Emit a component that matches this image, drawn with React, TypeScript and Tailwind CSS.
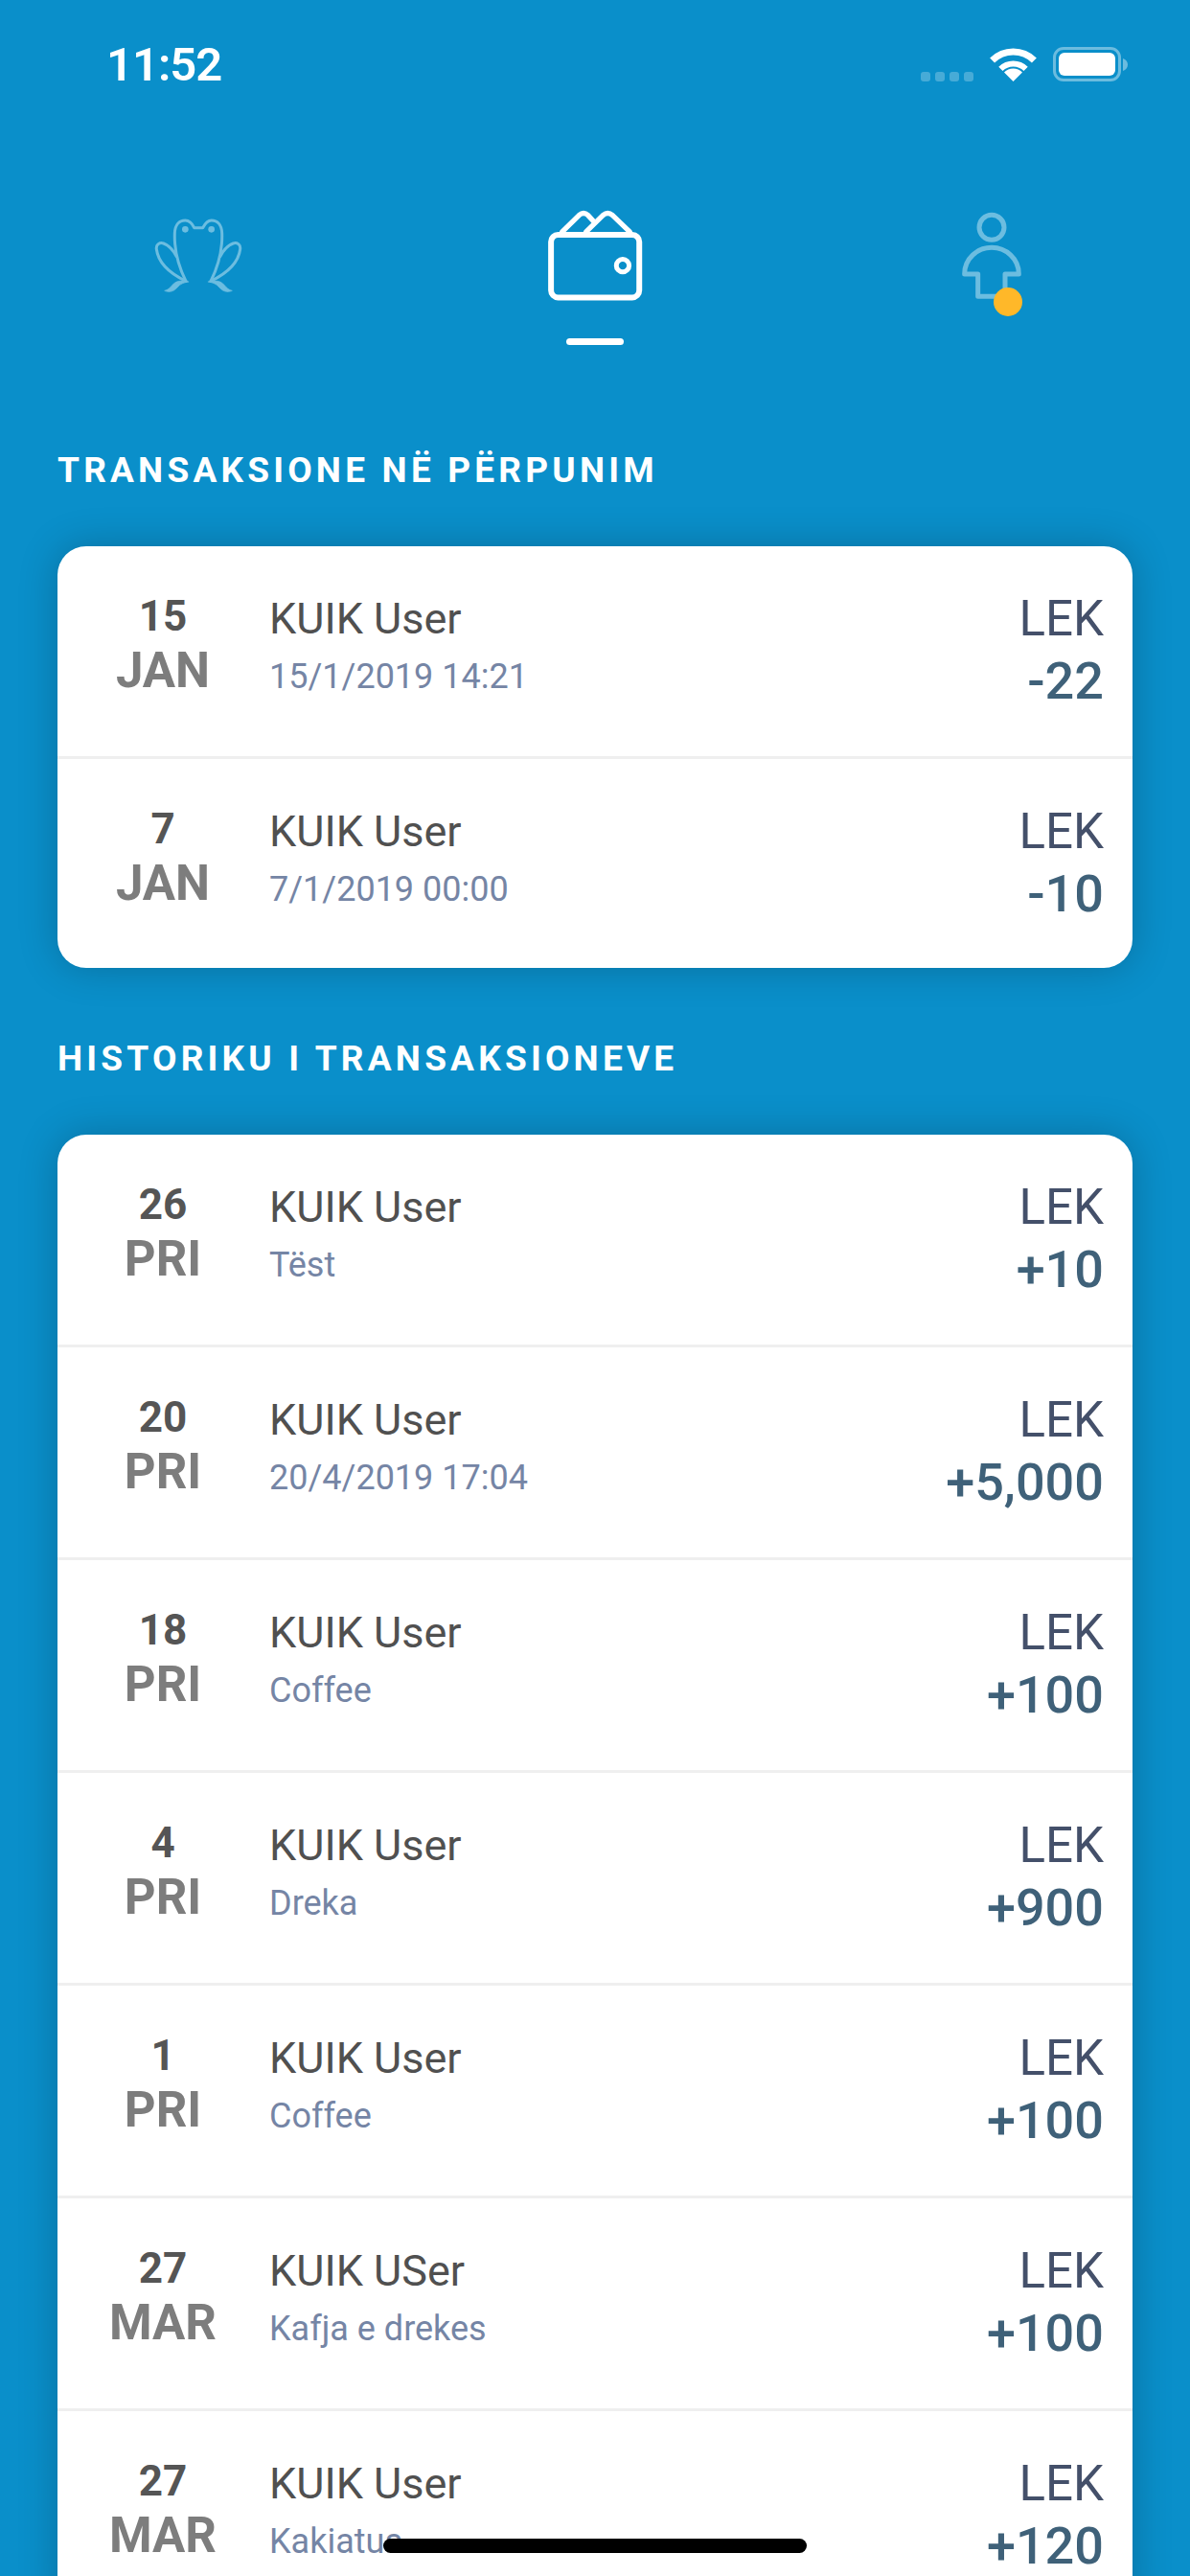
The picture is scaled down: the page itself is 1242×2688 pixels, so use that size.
const pending = [
  { day: "15", month: "JAN", name: "KUIK User", note: "15/1/2019 14:21", amount: "-22" },
  { day: "7", month: "JAN", name: "KUIK User", note: "7/1/2019 00:00", amount: "-10" },
];

const history = [
  { day: "26", month: "PRI", name: "KUIK User", note: "Tëst", amount: "+10" },
  { day: "20", month: "PRI", name: "KUIK User", note: "20/4/2019 17:04", amount: "+5,000" },
  { day: "18", month: "PRI", name: "KUIK User", note: "Coffee", amount: "+100" },
  { day: "4", month: "PRI", name: "KUIK User", note: "Dreka", amount: "+900" },
  { day: "1", month: "PRI", name: "KUIK User", note: "Coffee", amount: "+100" },
  { day: "27", month: "MAR", name: "KUIK USer", note: "Kafja e drekes", amount: "+100" },
  { day: "27", month: "MAR", name: "KUIK User", note: "Kakiatus", amount: "+120" },
];

type Tx = (typeof pending)[number];

function StatusBar() {
  return (
    <div className="flex h-[190px] items-start justify-between pl-[111px] pr-[65px] pt-[45px]">
      <span className="text-[49px] font-semibold leading-[46px] tracking-[-1px] text-white">11:52</span>
      <div className="flex items-start pt-[4px]">
        <div className="mt-[26px] flex gap-[5px]">
          <span className="h-[10px] w-[10px] rounded-[3px] bg-white/25" />
          <span className="h-[10px] w-[10px] rounded-[3px] bg-white/25" />
          <span className="h-[10px] w-[10px] rounded-[3px] bg-white/25" />
          <span className="h-[10px] w-[10px] rounded-[3px] bg-white/25" />
        </div>
        <svg className="ml-[17px]" width="49" height="36" viewBox="0 0 49 36" fill="none">
          <path d="M2.6 14.1A31 31 0 0 1 46.4 14.1" stroke="white" strokeWidth="7" />
          <path d="M11.4 22.9A18.5 18.5 0 0 1 37.6 22.9" stroke="white" strokeWidth="6" />
          <path d="M24.5 36L15 26.5A13.4 13.4 0 0 1 34 26.5Z" fill="white" />
        </svg>
        <div className="ml-[17px] h-[36px] w-[71px] rounded-[11px] border-[3px] border-white/40 p-[3px]">
          <div className="h-full w-full rounded-[6px] bg-white" />
        </div>
        <svg className="ml-[2px] mt-[12px]" width="5" height="13" viewBox="0 0 5 13">
          <path d="M0 0C3 1 5 3.5 5 6.5C5 9.5 3 12 0 13Z" fill="white" fillOpacity="0.4" />
        </svg>
      </div>
    </div>
  );
}

function FrogIcon() {
  return (
    <svg width="154" height="150" viewBox="0 0 462 450" fill="none" stroke="#6cbde0" strokeWidth="9" strokeLinecap="round" strokeLinejoin="round">
      <path d="M192 310C168 262 155 215 157 160C158 132 172 120 190 120C205 120 212 130 218 143H245C252 130 260 120 272 120C290 120 304 132 305 160C307 215 294 262 270 310" />
      <path d="M192 310C140 285 105 250 100 210C98 195 110 188 122 192C138 198 152 212 162 232" />
      <path d="M270 310C322 285 357 250 362 210C364 195 352 188 340 192C324 198 310 212 300 232" />
      <path d="M200 312C175 306 160 310 150 322C142 332 135 338 125 340C140 347 155 342 165 330C175 318 185 315 200 312Z" fill="#6cbde0" strokeWidth="2" />
      <path d="M262 312C287 306 302 310 312 322C320 332 327 338 337 340C322 347 307 342 297 330C287 318 277 315 262 312Z" fill="#6cbde0" strokeWidth="2" />
      <circle cx="190" cy="148" r="10" fill="#6cbde0" stroke="none" />
      <circle cx="272" cy="148" r="10" fill="#6cbde0" stroke="none" />
    </svg>
  );
}

function WalletIcon() {
  return (
    <svg width="160" height="133" viewBox="3 0 480 400" fill="none" stroke="white" strokeLinecap="round" strokeLinejoin="round">
      <rect x="105" y="135" width="277" height="197" rx="22" strokeWidth="18" />
      <circle cx="330" cy="232" r="20" strokeWidth="15" />
      <path d="M140 126L193 74Q207 62 221 74L240 95" strokeWidth="16" />
      <path d="M215 126L268 74Q283 62 298 74L352 126" strokeWidth="16" />
    </svg>
  );
}

function PersonIcon() {
  return (
    <div className="relative h-[150px] w-[150px]">
      <svg width="150" height="150" viewBox="0 0 450 450" fill="none" stroke="#6cbde0" strokeWidth="15" strokeLinejoin="round">
        <circle cx="225" cy="112" r="39" />
        <path d="M140 258C140 210 180 175 225 175C270 175 310 210 310 258H267V328H182V258Z" />
      </svg>
      <span className="absolute left-[77px] top-[100px] h-[30px] w-[30px] rounded-full bg-[#ffb829]" />
    </div>
  );
}

function TopNav() {
  return (
    <div className="grid h-[276px] grid-cols-3">
      <div className="flex justify-center">
        <FrogIcon />
      </div>
      <div className="flex flex-col items-center pt-[10px]">
        <WalletIcon />
        <span className="mt-[20px] h-[7px] w-[60px] rounded-full bg-white" />
      </div>
      <div className="flex justify-center pt-[10px]">
        <PersonIcon />
      </div>
    </div>
  );
}

function Row({ tx }: { tx: Tx }) {
  return (
    <div className="flex h-[222px] border-b-[3px] border-[#efefef] last:h-[218px] last:border-b-0">
      <div className="w-[220px] shrink-0 pt-[48px] text-center">
        <div className="text-[44px] font-bold leading-[50px] text-[#555555]">{tx.day}</div>
        <div className="text-[51px] font-bold leading-[64px] text-[#7d7d7d]">{tx.month}</div>
      </div>
      <div className="flex-1 pt-[51px] pl-[1px]">
        <div className="text-[45px] leading-[50px] text-[#505050]">{tx.name}</div>
        <div className="text-[36px] leading-[70px] text-[#7585a5]">{tx.note}</div>
      </div>
      <div className="pr-[30px] pt-[51px] text-right">
        <div className="text-[51px] leading-[50px] text-[#44506a]">LEK</div>
        <div className="text-[54px] font-medium leading-[80px] text-[#3f6179]">{tx.amount}</div>
      </div>
    </div>
  );
}

function Section({ title, items }: { title: string; items: Tx[] }) {
  return (
    <section>
      <h2 className="h-[50px] px-[60px] text-[37px] font-bold leading-[50px] tracking-[4.2px] text-white">{title}</h2>
      <div className="mx-[60px] mt-[54px] overflow-hidden rounded-[30px] bg-white shadow-[0_0_40px_rgba(0,0,0,0.22)]">
        {items.map((tx, i) => (
          <Row key={i} tx={tx} />
        ))}
      </div>
    </section>
  );
}

export default function App() {
  return (
    <div className="relative h-[2688px] w-[1242px] overflow-hidden bg-[#0a8fca] font-['Roboto',sans-serif]">
      <StatusBar />
      <TopNav />
      <Section title="TRANSAKSIONE NË PËRPUNIM" items={pending} />
      <div className="h-[70px]" />
      <Section title="HISTORIKU I TRANSAKSIONEVE" items={history} />
      <div className="absolute left-[400px] top-[2649px] h-[15px] w-[442px] rounded-full bg-black" />
    </div>
  );
}
